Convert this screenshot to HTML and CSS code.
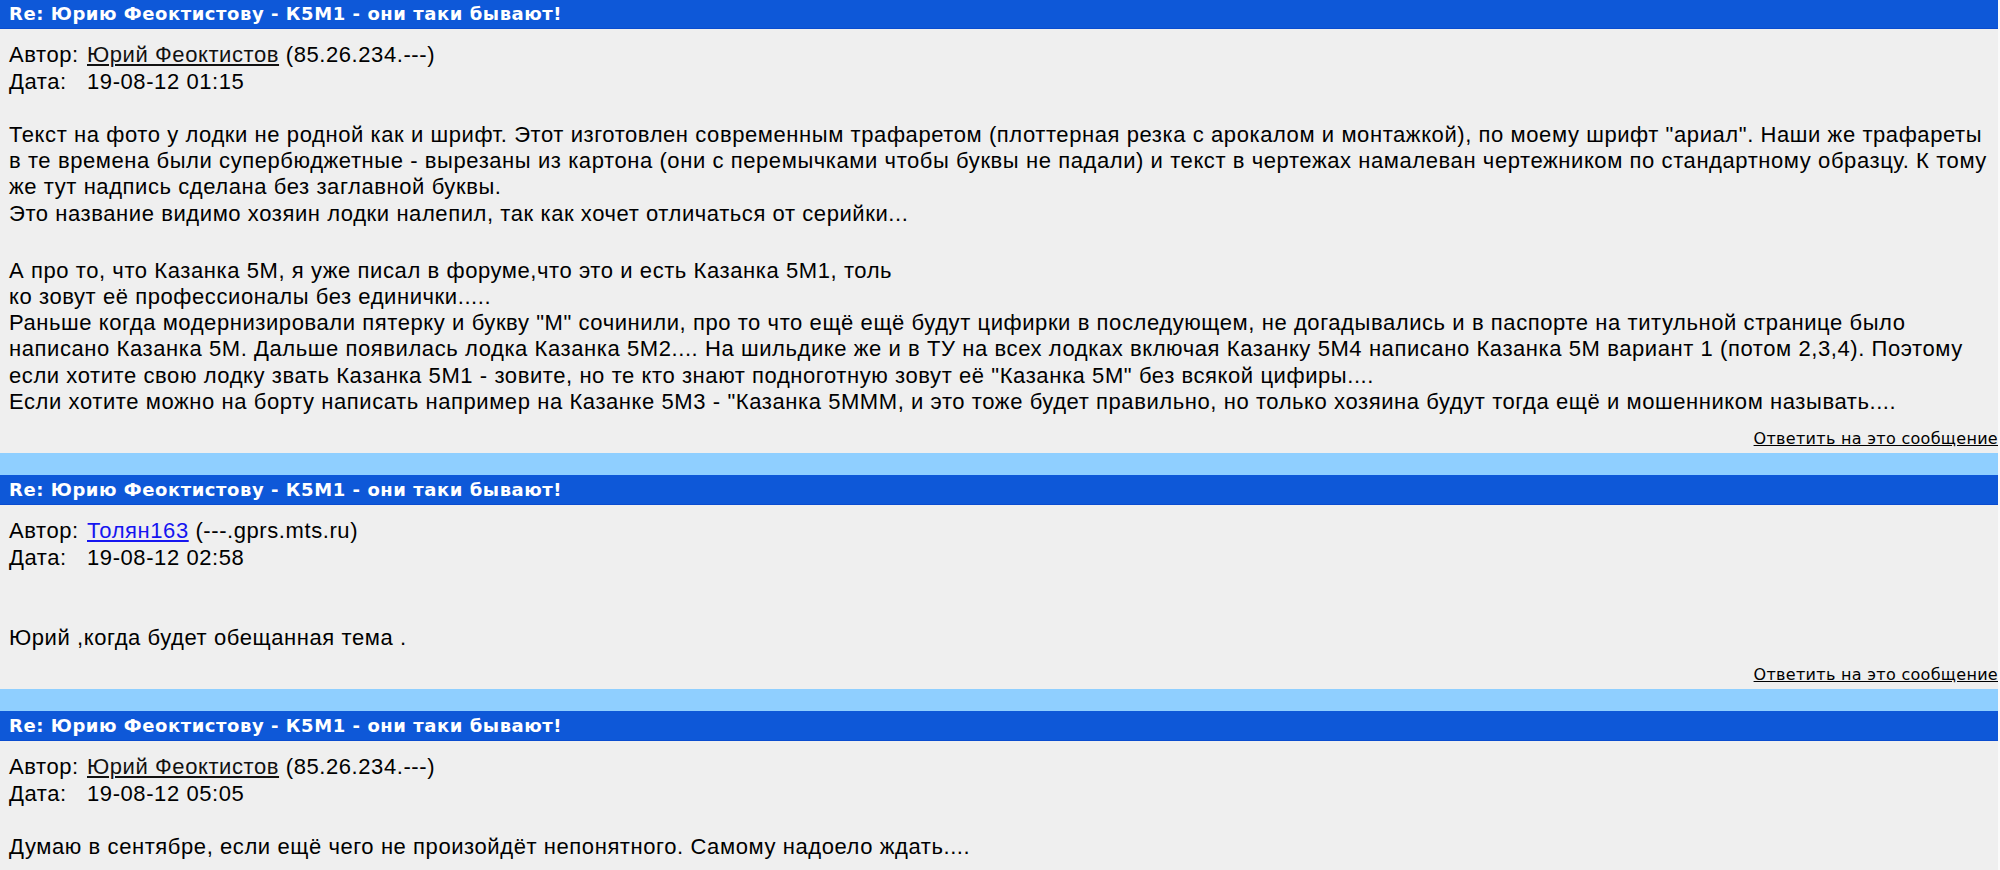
FILE: index.html
```html
<!DOCTYPE html>
<html lang="ru">
<head>
  <meta charset="UTF-8">
  <title>Re: Юрию Феоктистову - К5М1 - они таки бывают!</title>
  <link rel="stylesheet" href="styles.css">
</head>
<body>
  <div class="thread">

    <div class="msg">
      <div class="msg-title">Re: Юрию Феоктистову - К5М1 - они таки бывают!</div>
      <div class="msg-body">
        <div class="msg-meta">
          <span>Автор:</span>
          <span><a class="author" href="#">Юрий Феоктистов</a> (85.26.234.---)</span>
          <span>Дата:</span>
          <span>19-08-12 01:15</span>
        </div>
        <br>
        <p class="msg-text">Текст на фото у лодки не родной как и шрифт. Этот изготовлен современным трафаретом (плоттерная резка с арокалом и монтажкой), по моему шрифт "ариал". Наши же трафареты в&nbsp;те времена были супербюджетные - вырезаны из картона (они с перемычками чтобы буквы не падали) и текст в чертежах намалеван чертежником по стандартному образцу. К тому же тут надпись сделана без заглавной буквы.<br>Это название видимо хозяин лодки налепил, так как хочет отличаться от серийки...</p>
        <p class="msg-text next">А про то, что Казанка 5М, я уже писал в форуме,что это и есть Казанка 5М1, толь<br>ко зовут её профессионалы без единички.....<br>Раньше когда модернизировали пятерку и букву "М" сочинили, про то что ещё ещё будут цифирки в последующем, не догадывались и в паспорте на титульной странице было написано Казанка 5М. Дальше появилась лодка Казанка 5М2.... На шильдике же и в ТУ на всех лодках включая Казанку 5М4 написано Казанка 5М вариант 1 (потом 2,3,4). Поэтому если хотите свою лодку звать Казанка 5М1 - зовите, но те кто знают подноготную зовут её "Казанка 5М" без всякой цифиры....<br>Если хотите можно на борту написать например на Казанке 5М3 - "Казанка 5МММ, и это тоже будет правильно, но только хозяина будут тогда ещё и мошенником называть....</p>
      </div>
      <div class="msg-reply"><a href="#">Ответить на это сообщение</a></div>
    </div>
    <div class="msg-gap"></div>

    <div class="msg">
      <div class="msg-title">Re: Юрию Феоктистову - К5М1 - они таки бывают!</div>
      <div class="msg-body">
        <div class="msg-meta">
          <span>Автор:</span>
          <span><a class="author new" href="#">Толян163</a> (---.gprs.mts.ru)</span>
          <span>Дата:</span>
          <span>19-08-12 02:58</span>
        </div>
        <br><br>
        <p class="msg-text">Юрий ,когда будет обещанная тема .</p>
      </div>
      <div class="msg-reply"><a href="#">Ответить на это сообщение</a></div>
    </div>
    <div class="msg-gap"></div>

    <div class="msg">
      <div class="msg-title">Re: Юрию Феоктистову - К5М1 - они таки бывают!</div>
      <div class="msg-body">
        <div class="msg-meta">
          <span>Автор:</span>
          <span><a class="author" href="#">Юрий Феоктистов</a> (85.26.234.---)</span>
          <span>Дата:</span>
          <span>19-08-12 05:05</span>
        </div>
        <br>
        <p class="msg-text">Думаю в сентябре, если ещё чего не произойдёт непонятного. Самому надоело ждать....</p>
      </div>
      <div class="msg-reply"><a href="#">Ответить на это сообщение</a></div>
    </div>

  </div>
</body>
</html>
```

FILE: styles.css
```css
body {
  margin: 0;
  background: #fafafa;
  font-family: "Liberation Sans", Arial, sans-serif;
  color: #000;
  overflow: hidden;
}
.thread { width: 1998px; margin-top: -1px; }
.msg { background: #efefef; }
.msg-title {
  height: 29px;
  padding-left: 9px;
  background: #0e58d8;
  border-bottom: 1px solid #0a4ccf;
  color: #fff;
  font-family: "DejaVu Sans", Verdana, sans-serif;
  font-weight: bold;
  font-size: 18px;
  letter-spacing: 0.55px;
  line-height: 29px;
}
.msg-body {
  padding: 12px 0 0 9px;
  font-size: 22px;
  letter-spacing: 0.58px;
  line-height: 27px;
}
.msg-meta {
  display: grid;
  grid-template-columns: 78px auto;
}
.msg-text { margin: 0; line-height: 26.2px; }
.msg-text.next { margin-top: 31px; }
a.author { color: #111; }
a.author.new { color: #1515f0; }
.msg-reply {
  margin-top: 14px;
  padding-bottom: 4px;
  text-align: right;
  font-family: "DejaVu Sans", Verdana, sans-serif;
  font-size: 16px;
  letter-spacing: 0.3px;
  line-height: 20px;
}
.msg-reply a { color: #000; }
.msg-gap { height: 22px; background: #8fcfff; }
```
